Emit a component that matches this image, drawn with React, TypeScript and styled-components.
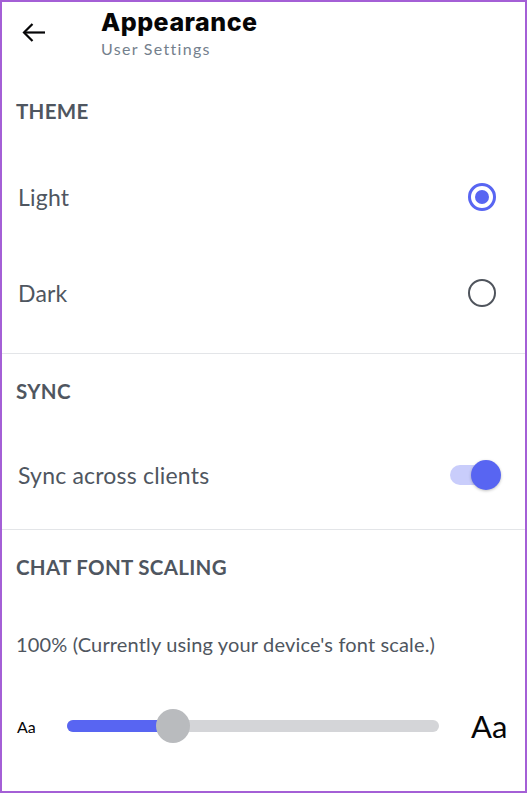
import React from 'react';
import styled, { createGlobalStyle } from 'styled-components';

const GlobalStyle = createGlobalStyle`
    html, body {
        margin: 0;
        padding: 0;
        background: #ffffff;
    }
    * {
        box-sizing: border-box;
    }
`;

const blurple = '#5865f2';

const App: React.FC = () => {
    const sliderValue = 0.285;

    return (
        <>
            <GlobalStyle />
            <Frame>
                <Header>
                    <BackButton aria-label="Back">
                        <svg width="24" height="19" viewBox="0 0 24 19" fill="none">
                            <path d="M23 9.5H2" stroke="#060607" strokeWidth="2.2" />
                            <path d="M10.5 1L2 9.5L10.5 18" stroke="#060607" strokeWidth="2.2" />
                        </svg>
                    </BackButton>
                    <TitleBlock>
                        <Title>Appearance</Title>
                        <Subtitle>User Settings</Subtitle>
                    </TitleBlock>
                </Header>

                <Section>
                    <SectionTitle height={62}>Theme</SectionTitle>
                    <OptionList>
                        <OptionRow>
                            <Label>Light</Label>
                            <Radio checked />
                        </OptionRow>
                        <OptionRow>
                            <Label>Dark</Label>
                            <Radio />
                        </OptionRow>
                    </OptionList>
                </Section>

                <Divider />

                <Section>
                    <SectionTitle height={74}>Sync</SectionTitle>
                    <SyncRow>
                        <Label>Sync across clients</Label>
                        <Toggle>
                            <Track />
                            <Thumb />
                        </Toggle>
                    </SyncRow>
                </Section>

                <Divider />

                <Section>
                    <SectionTitle height={74}>Chat Font Scaling</SectionTitle>
                    <Description>100% (Currently using your device's font scale.)</Description>
                    <SliderRow>
                        <SmallAa>Aa</SmallAa>
                        <Slider>
                            <SliderFill style={{ width: `${sliderValue * 100}%` }} />
                            <SliderKnob style={{ left: `${sliderValue * 100}%` }} />
                        </Slider>
                        <LargeAa>Aa</LargeAa>
                    </SliderRow>
                </Section>
            </Frame>
        </>
    );
};

const Frame = styled.div`
    width: 527px;
    height: 793px;
    border: 2px solid #a45fd6;
    background: #ffffff;
    font-family: Lato, "Noto Sans", sans-serif;
    color: #4f5660;
    overflow: hidden;
`;

const Header = styled.header`
    display: flex;
    align-items: flex-start;
    height: 78px;
    padding: 20px 0 0 20px;
`;

const BackButton = styled.button`
    display: flex;
    align-items: center;
    justify-content: center;
    width: 24px;
    height: 19px;
    margin-top: 1px;
    padding: 0;
    border: none;
    background: none;
`;

const TitleBlock = styled.div`
    display: flex;
    flex-direction: column;
    margin-left: 55px;
    margin-top: -16px;
`;

const Title = styled.h1`
    margin: 0;
    font-family: Inter, "Noto Sans", sans-serif;
    font-weight: 800;
    font-size: 25px;
    line-height: 33px;
    letter-spacing: 0.5px;
    color: #060607;
`;

const Subtitle = styled.div`
    font-size: 16px;
    line-height: 20px;
    letter-spacing: 1.3px;
    color: #747f8d;
    margin-top: 0;
`;

const Section = styled.section`
    display: flex;
    flex-direction: column;
    padding: 0 14px;
`;

const SectionTitle = styled.h2<{ height: number }>`
    display: flex;
    align-items: center;
    height: ${p => p.height}px;
    margin: 0;
    font-size: 20.5px;
    font-weight: 700;
    letter-spacing: 0.3px;
    text-transform: uppercase;
    color: #4f5660;
`;

const OptionList = styled.div`
    display: flex;
    flex-direction: column;
    padding: 7px 0 12px;
`;

const OptionRow = styled.div`
    display: flex;
    align-items: center;
    justify-content: space-between;
    height: 96px;
    padding-right: 15px;
`;

const Label = styled.span`
    font-size: 23px;
    letter-spacing: 0.2px;
    color: #4f5660;
    padding-left: 2px;
`;

const Radio = styled.span<{ checked?: boolean }>`
    display: flex;
    align-items: center;
    justify-content: center;
    width: 28px;
    height: 28px;
    border-radius: 50%;
    border: ${p => (p.checked ? `3px solid ${blurple}` : '2.5px solid #4f545c')};

    &::after {
        content: '';
        display: ${p => (p.checked ? 'block' : 'none')};
        width: 14px;
        height: 14px;
        border-radius: 50%;
        background: ${blurple};
    }
`;

const Divider = styled.hr`
    height: 1px;
    margin: 0;
    border: none;
    background: #e3e5e8;
`;

const SyncRow = styled.div`
    display: flex;
    align-items: center;
    justify-content: space-between;
    height: 94px;
    margin-bottom: 7px;
    padding-right: 10px;
`;

const Toggle = styled.div`
    position: relative;
    width: 51px;
    height: 30px;
    display: flex;
    align-items: center;
`;

const Track = styled.div`
    width: 42px;
    height: 20px;
    border-radius: 10px;
    background: #c9cdfb;
`;

const Thumb = styled.div`
    position: absolute;
    right: 0;
    top: 0;
    width: 30px;
    height: 30px;
    border-radius: 50%;
    background: ${blurple};
    box-shadow: 0 1px 3px rgba(0, 0, 0, 0.25);
`;

const Description = styled.p`
    display: flex;
    align-items: center;
    height: 80px;
    margin: 0;
    font-size: 20px;
    letter-spacing: 0.15px;
    color: #4f5660;
`;

const SliderRow = styled.div`
    display: flex;
    align-items: center;
    height: 84px;
`;

const SmallAa = styled.span`
    width: 51px;
    padding-left: 1px;
    font-size: 16px;
    color: #060607;
`;

const Slider = styled.div`
    position: relative;
    width: 372px;
    height: 12px;
    border-radius: 6px;
    background: #d4d5d8;
`;

const SliderFill = styled.div`
    height: 100%;
    border-radius: 6px;
    background: ${blurple};
`;

const SliderKnob = styled.div`
    position: absolute;
    top: 50%;
    width: 34px;
    height: 34px;
    border-radius: 50%;
    background: #b9bbbe;
    transform: translate(-50%, -50%);
`;

const LargeAa = styled.span`
    margin-left: 32px;
    font-size: 31px;
    color: #060607;
`;

export default App;
